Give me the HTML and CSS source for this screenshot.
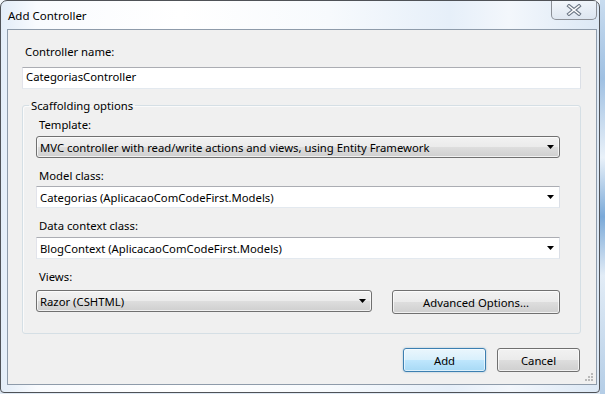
FILE: index.html
```html
<!DOCTYPE html>
<html>
<head>
<meta charset="utf-8">
<title>Add Controller</title>
<link rel="stylesheet" href="styles.css">
</head>
<body>
<div class="desktop">
  <div class="window">
    <div class="titlebar">
      <span class="title">Add Controller</span>
      <div class="close">
        <svg width="16" height="12" viewBox="0 0 16 12"><path d="M3 2 L13 10 M13 2 L3 10" stroke="#6d7886" stroke-width="3.6" stroke-linecap="square" fill="none"/><path d="M3 2 L13 10 M13 2 L3 10" stroke="#ffffff" stroke-width="1.6" stroke-linecap="square" fill="none"/></svg>
      </div>
    </div>
    <div class="client">
      <div class="lbl">Controller name:</div>
      <div class="textbox">CategoriasController</div>
      <fieldset class="group">
        <legend>Scaffolding options</legend>
        <div class="lbl">Template:</div>
        <div class="combo btn first"><span class="ctext">MVC controller with read/write actions and views, using Entity Framework</span><svg class="arrow" width="7" height="4" viewBox="0 0 7 4"><path d="M0 0 H7 L3.5 4 Z" fill="#000"/></svg></div>
        <div class="lbl sp">Model class:</div>
        <div class="combo edit mid"><span class="ctext">Categorias (AplicacaoComCodeFirst.Models)</span><svg class="arrow" width="7" height="4" viewBox="0 0 7 4"><path d="M0 0 H7 L3.5 4 Z" fill="#000"/></svg></div>
        <div class="lbl sp">Data context class:</div>
        <div class="combo edit first"><span class="ctext">BlogContext (AplicacaoComCodeFirst.Models)</span><svg class="arrow" width="7" height="4" viewBox="0 0 7 4"><path d="M0 0 H7 L3.5 4 Z" fill="#000"/></svg></div>
        <div class="lbl sp">Views:</div>
        <div class="viewsrow">
          <div class="combo btn"><span class="ctext">Razor (CSHTML)</span><svg class="arrow" width="7" height="4" viewBox="0 0 7 4"><path d="M0 0 H7 L3.5 4 Z" fill="#000"/></svg></div>
          <div class="btn push tall">Advanced Options...</div>
        </div>
      </fieldset>
      <div class="actions">
        <div class="btn push default">Add</div>
        <div class="btn push">Cancel</div>
      </div>
      <svg class="grip" width="10" height="10" viewBox="0 0 10 10">
        <g fill="#b9b9b9"><rect x="8" y="0" width="2" height="2"/><rect x="5" y="3" width="2" height="2"/><rect x="8" y="3" width="2" height="2"/><rect x="2" y="6" width="2" height="2"/><rect x="5" y="6" width="2" height="2"/><rect x="8" y="6" width="2" height="2"/></g>
      </svg>
    </div>
  </div>
  <div class="edge"></div>
</div>
</body>
</html>
```
FILE: styles.css
```css
* { box-sizing: border-box; margin: 0; padding: 0; }
html, body { width: 605px; height: 394px; overflow: hidden; }
body {
  background: #e4edf6;
  font-family: "Noto Sans", "Open Sans", "DejaVu Sans", sans-serif;
  font-size: 11.3px;
  color: #000;
}
.desktop {
  display: flex;
  width: 605px;
  height: 394px;
  background: linear-gradient(180deg, #f4f8fc 0%, #dfe9f4 100%);
}
.window {
  width: 600px;
  height: 393px;
  border: 1px solid #4f5257;
  border-radius: 7px 7px 4px 4px;
  background: linear-gradient(90deg, #e3edf8 0%, #f9fbfe 6%, #ffffff 30%, #f7fafd 55%, #e6eff9 75%, #f3f7fc 85%, #dce8f5 100%);
  padding: 0 2px 7px 6px;
  display: flex;
  flex-direction: column;
}
.titlebar {
  height: 28px;
  display: flex;
  align-items: flex-start;
}
.title {
  padding: 7px 0 0 1px;
  line-height: 15px;
  font-size: 11.5px;
}
.close {
  margin-left: auto;
  width: 46px;
  height: 19px;
  border: 1px solid #8b8f96;
  border-top: none;
  border-radius: 0 0 5px 5px;
  background: linear-gradient(180deg, rgba(255,255,255,0.5), rgba(220,228,238,0.7));
  display: flex;
  align-items: center;
  justify-content: center;
}
.client {
  flex: 1;
  border: 1px solid #8e9baa;
  background: #f0f0f0;
  padding: 14px 15px 0 14px;
  display: flex;
  flex-direction: column;
  position: relative;
}
.lbl {
  height: 15px;
  line-height: 15px;
  padding-left: 3px;
}
.textbox {
  margin-top: 8px;
  height: 22px;
  background: #fff;
  border: 1px solid;
  border-color: #abadb3 #dbdfe6 #e3e9ef #e2e3ea;
  padding: 0 3px 2px;
  line-height: 18px;
}
.group {
  margin-top: 9px;
  border: 1px solid #d5dfe5;
  border-radius: 3px;
  padding: 4px 20px 19px 13px;
  min-width: 0;
  box-shadow: inset 1px 1px 0 #fafafa;
}
.group legend {
  line-height: 15px;
  padding: 0 2px;
  margin-left: -7px;
}
.group .lbl.sp { margin-top: 10px; }
.combo {
  height: 22px;
  display: flex;
  align-items: center;
  padding: 0 5px 0 3px;
}
.combo.first { margin-top: 4px; }
.combo.mid { margin-top: 3px; }
.ctext { flex: 1; line-height: 15px; white-space: nowrap; overflow: hidden; }
.arrow { flex: none; }
.combo.edit {
  background: #fff;
  border: 1px solid;
  border-color: #abadb3 #dbdfe6 #e3e9ef #e2e3ea;
}
.btn {
  border: 1px solid #707070;
  border-radius: 3px;
  background: linear-gradient(180deg, #f2f2f2 0%, #ebebeb 48%, #dddddd 52%, #cfcfcf 100%);
  box-shadow: inset 0 0 0 1px rgba(255,255,255,0.7);
}
.viewsrow {
  margin-top: 6px;
  display: grid;
  grid-template-columns: 1fr 168px;
  column-gap: 20px;
  align-items: start;
}
.push {
  height: 23px;
  display: flex;
  align-items: center;
  justify-content: center;
  line-height: 15px;
}
.push.tall { height: 24px; }
.actions {
  margin-top: 14px;
  display: flex;
  justify-content: flex-end;
  gap: 11px;
  padding-right: 1px;
}
.actions .push { width: 83px; height: 24px; }
.push.default {
  border-color: #3c7fb1;
  background: linear-gradient(180deg, #eaf6fd 0%, #d9f0fc 48%, #bee6fd 52%, #a7d9f5 100%);
  box-shadow: inset 0 0 0 1px rgba(255,255,255,0.6), 0 0 2px rgba(60,127,177,0.5);
}
.grip {
  position: absolute;
  right: 3px;
  bottom: 1px;
}
.edge {
  flex: 1;
  background: linear-gradient(180deg, #c9dcef 0%, #9fc0e2 20%, #e9f1f9 40%, #7aa9d8 55%, #e2ecf6 70%, #b4cde6 100%);
}
```
